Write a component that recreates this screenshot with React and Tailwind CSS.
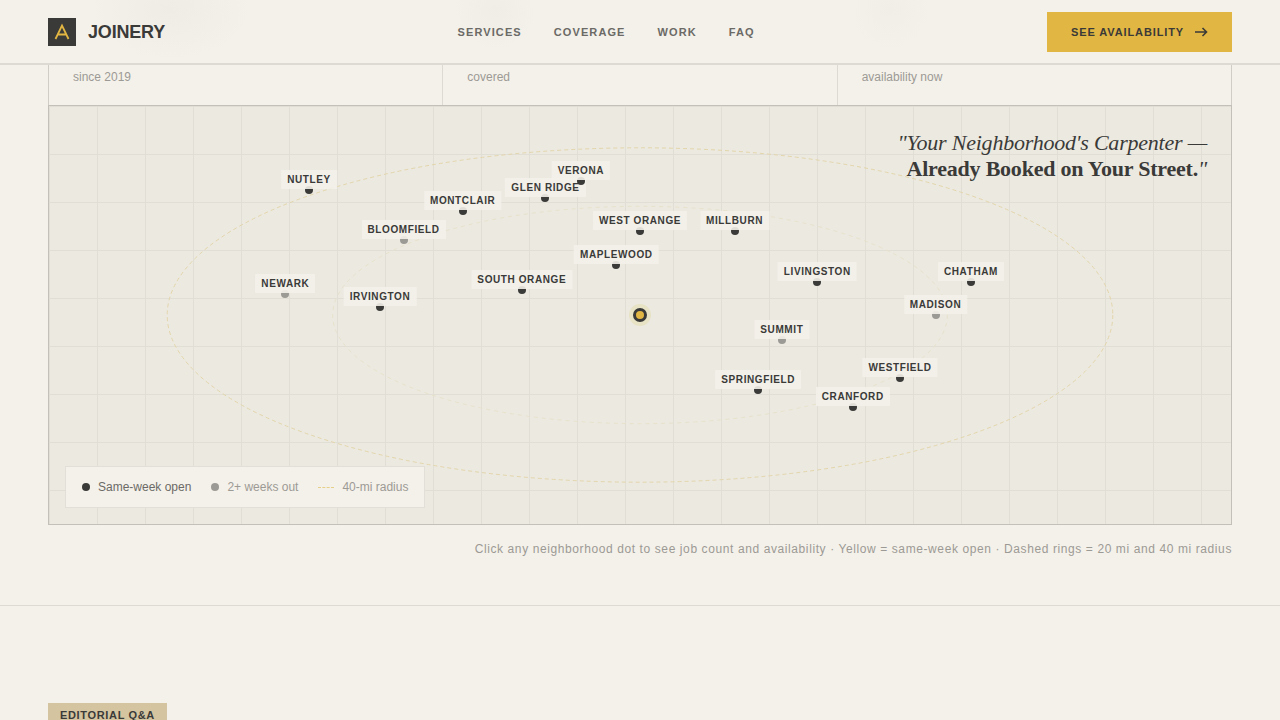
const navLinks = ['Services', 'Coverage', 'Work', 'FAQ'];

const stats = ['since 2019', 'covered', 'availability now'];

// x and y are percentages of the map's width and height
const towns = [
    { name: 'Nutley', x: 22, y: 20, open: true },
    { name: 'Montclair', x: 35, y: 25, open: true },
    { name: 'Bloomfield', x: 30, y: 32, open: false },
    { name: 'Newark', x: 20, y: 45, open: false },
    { name: 'Irvington', x: 28, y: 48, open: true },
    { name: 'South Orange', x: 40, y: 44, open: true },
    { name: 'Glen Ridge', x: 42, y: 22, open: true },
    { name: 'Verona', x: 45, y: 18, open: true },
    { name: 'Maplewood', x: 48, y: 38, open: true },
    { name: 'West Orange', x: 50, y: 30, open: true },
    { name: 'Millburn', x: 58, y: 30, open: true },
    { name: 'Livingston', x: 65, y: 42, open: true },
    { name: 'Summit', x: 62, y: 56, open: false },
    { name: 'Springfield', x: 60, y: 68, open: true },
    { name: 'Cranford', x: 68, y: 72, open: true },
    { name: 'Westfield', x: 72, y: 65, open: true },
    { name: 'Madison', x: 75, y: 50, open: false },
    { name: 'Chatham', x: 78, y: 42, open: true },
];

const Header = () => {
    return (
        <header className="sticky top-0 z-20 px-12 pt-3 pb-[11px] flex items-center justify-between bg-[#f4f1ea] bg-[radial-gradient(ellipse_80px_50px_at_170px_10px,#efece5,transparent),radial-gradient(ellipse_40px_40px_at_495px_10px,#f0ede6,transparent),radial-gradient(ellipse_40px_40px_at_890px_10px,#f1eee7,transparent)] border-b-2 border-[#dddad3]">
            <a href="#" className="flex items-center gap-3">
                <svg className="w-7 h-7" viewBox="0 0 28 28" fill="none">
                    <rect width="28" height="28" fill="#3a3a38" />
                    <path d="M7.5 21 14 7.5 20.5 21M10 16.5h8" stroke="#e2b642" strokeWidth="1.8" />
                </svg>
                <span className="text-lg font-bold tracking-[-0.01em]">JOINERY</span>
            </a>
            <nav className="flex gap-8">
                {navLinks.map((link) => (
                    <a key={link} href={`#${link.toLowerCase()}`} className="text-[11px] leading-4 font-bold uppercase tracking-widest text-[#6b6a66]">
                        {link}
                    </a>
                ))}
            </nav>
            <button className="h-10 px-6 flex items-center gap-2.5 bg-[#e2b642] text-[11px] leading-4 font-bold uppercase tracking-[0.08em]">
                See Availability
                <svg className="w-3.5 h-3.5" viewBox="0 0 14 14" fill="none" stroke="currentColor" strokeWidth="1.6">
                    <path d="M1 7h11.5M8.5 3 12.5 7l-4 4" />
                </svg>
            </button>
        </header>
    );
};

const Town = ({ name, x, y, open }) => {
    return (
        <button
            className="absolute w-2 h-2 -translate-x-1/2 -translate-y-1/2"
            style={{ left: `${x}%`, top: `${y}%` }}
        >
            <span className={`block w-2 h-2 rounded-full ${open ? 'bg-[#3a3a38]' : 'bg-[#9c9a95]'}`} />
            <span className="absolute bottom-[5px] left-1/2 -translate-x-1/2 px-1.5 py-0.5 bg-[#f4f1ea]/90 text-[10px] leading-[15px] font-bold uppercase tracking-[0.06em] whitespace-nowrap">
                {name}
            </span>
        </button>
    );
};

const Legend = () => {
    return (
        <div className="absolute left-4 bottom-4 px-4 py-3 flex items-center gap-5 bg-[#f4f1ea] border border-[#e2dfd8] text-xs text-[#9c9a95]">
            <div className="flex items-center gap-2 text-[#6b6a66]">
                <span className="w-2 h-2 rounded-full bg-[#3a3a38]" />
                Same-week open
            </div>
            <div className="flex items-center gap-2">
                <span className="w-2 h-2 rounded-full bg-[#9c9a95]" />
                2+ weeks out
            </div>
            <div className="flex items-center gap-2">
                <span className="w-4 border-t border-dashed border-[#e6cf88]" />
                40-mi radius
            </div>
        </div>
    );
};

const CoverageMap = () => {
    return (
        <div className="relative h-[420px] border border-[#c3c0ba] bg-[#ece9e1] bg-[linear-gradient(#e1ded6_1px,transparent_1px),linear-gradient(90deg,#e1ded6_1px,transparent_1px)] bg-[size:48px_48px]">
            <svg className="absolute inset-0 w-full h-full" fill="none" strokeWidth="1">
                <ellipse cx="50%" cy="50%" rx="40%" ry="40%" stroke="#e3d6ab" strokeDasharray="4 3" />
                <ellipse cx="50%" cy="50%" rx="26%" ry="26%" stroke="#e8e2cb" strokeDasharray="4 4" />
            </svg>

            {towns.map((town) => (
                <Town key={town.name} {...town} />
            ))}

            <div className="absolute left-1/2 top-1/2 w-3.5 h-3.5 -translate-x-1/2 -translate-y-1/2 rounded-full bg-[#e2b642] border-3 border-[#3a3a38] ring-4 ring-[#e6dfb8]/70" />

            <p className="absolute top-6 right-6 text-right font-['Liberation_Serif',serif] italic text-[22px] leading-[26px] tracking-[-0.01em]">
                "Your Neighborhood's Carpenter —
                <br />
                <strong className="not-italic font-bold">Already Booked on Your Street.</strong>"
            </p>

            <Legend />
        </div>
    );
};

const App = () => {
    return (
        <div className="min-h-screen bg-[#f4f1ea] font-['Liberation_Sans',Arial,sans-serif] text-[#3a3a38]">
            <Header />
            <section id="coverage" className="px-12 pb-12 border-b border-[#dddad3]">
                <div className="grid grid-cols-3 gap-px bg-[#dddad3] border-x border-[#d0cdc6]">
                    {stats.map((stat) => (
                        <div key={stat} className="h-10 px-6 pt-1 bg-[#f4f1ea] text-xs text-[#9c9a95]">
                            {stat}
                        </div>
                    ))}
                </div>
                <CoverageMap />
                <p className="mt-4 text-right text-xs tracking-wider text-[#9c9a95]">
                    Click any neighborhood dot to see job count and availability · Yellow = same-week open · Dashed rings = 20 mi and 40 mi radius
                </p>
            </section>
            <section id="faq" className="px-12 pt-24">
                <span className="inline-block px-3 py-1 bg-[#d4c4a0] text-[11px] leading-4 font-bold uppercase tracking-[0.06em]">
                    Editorial Q&amp;A
                </span>
            </section>
        </div>
    );
};

export default App;
